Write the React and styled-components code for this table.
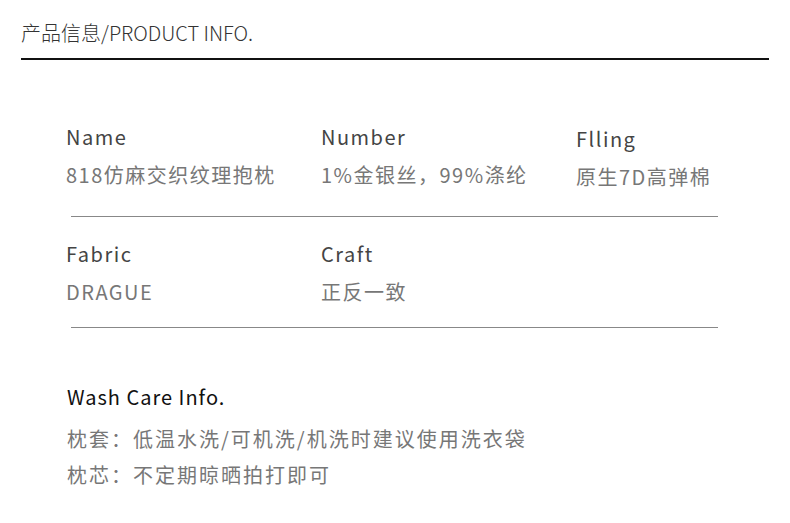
import React from 'react';
import styled, { createGlobalStyle } from 'styled-components';

const specs = [
  [
    { label: 'Name', value: '818仿麻交织纹理抱枕' },
    { label: 'Number', value: '1%金银丝，99%涤纶' },
    { label: 'Flling', value: '原生7D高弹棉', shift: true },
  ],
  [
    { label: 'Fabric', value: 'DRAGUE' },
    { label: 'Craft', value: '正反一致' },
  ],
];

const care = [
  '枕套：低温水洗/可机洗/机洗时建议使用洗衣袋',
  '枕芯：不定期晾晒拍打即可',
];

const App = () => {
  return (
    <Page>
      <GlobalStyle />
      <Header>产品信息/PRODUCT INFO.</Header>
      <Specs>
        {specs.map((row, i) => {
          const last = i === specs.length - 1;
          return (
            <Row key={i} $last={last}>
              <Cells $last={last}>
                {row.map((c) => (
                  <Cell key={c.label} $shift={c.shift}>
                    <Label>{c.label}</Label>
                    <Value>{c.value}</Value>
                  </Cell>
                ))}
              </Cells>
              <Divider />
            </Row>
          );
        })}
      </Specs>
      <Care>
        <CareTitle>Wash Care Info.</CareTitle>
        {care.map((line) => (
          <CareLine key={line}>{line}</CareLine>
        ))}
      </Care>
    </Page>
  );
};

const GlobalStyle = createGlobalStyle`
  body {
    margin: 0;
    background: #fff;
    font-family: "Noto Sans CJK SC", "Noto Sans", sans-serif;
  }
`;

const Page = styled.div`
  width: 790px;
  height: 523px;
  background: #fff;
  overflow: hidden;
`;

const Header = styled.div`
  margin: 0 21px;
  padding-top: 18px;
  padding-bottom: 11px;
  border-bottom: 2px solid #111;
  font-size: 20px;
  line-height: 29px;
  color: #333;
  font-weight: 300;
`;

const Specs = styled.div`
  padding: 62px 0 0 66px;
`;

const Row = styled.div`
  display: flex;
  flex-direction: column;
  padding-bottom: ${(p) => (p.$last ? '0' : '22px')};
`;

const Cells = styled.div`
  display: grid;
  grid-template-columns: 255px 255px 255px;
  padding-bottom: ${(p) => (p.$last ? '21px' : '25px')};
`;

const Cell = styled.div`
  display: flex;
  flex-direction: column;
  gap: 9px;
  padding-top: ${(p) => (p.$shift ? '2px' : '0')};
`;

const Label = styled.div`
  font-size: 20px;
  line-height: 29px;
  letter-spacing: 1.5px;
  color: #444;
`;

const Value = styled.div`
  font-size: 20px;
  line-height: 29px;
  letter-spacing: 1.5px;
  color: #777;
`;

const Divider = styled.div`
  margin-left: 5px;
  width: 647px;
  height: 1px;
  background: #888;
`;

const Care = styled.div`
  padding: 54px 0 0 67px;
`;

const CareTitle = styled.div`
  font-size: 20px;
  line-height: 29px;
  letter-spacing: 1px;
  color: #111;
  margin-bottom: 10px;
`;

const CareLine = styled.div`
  font-size: 20px;
  line-height: 36px;
  letter-spacing: 2px;
  color: #777;
`;

export default App;
